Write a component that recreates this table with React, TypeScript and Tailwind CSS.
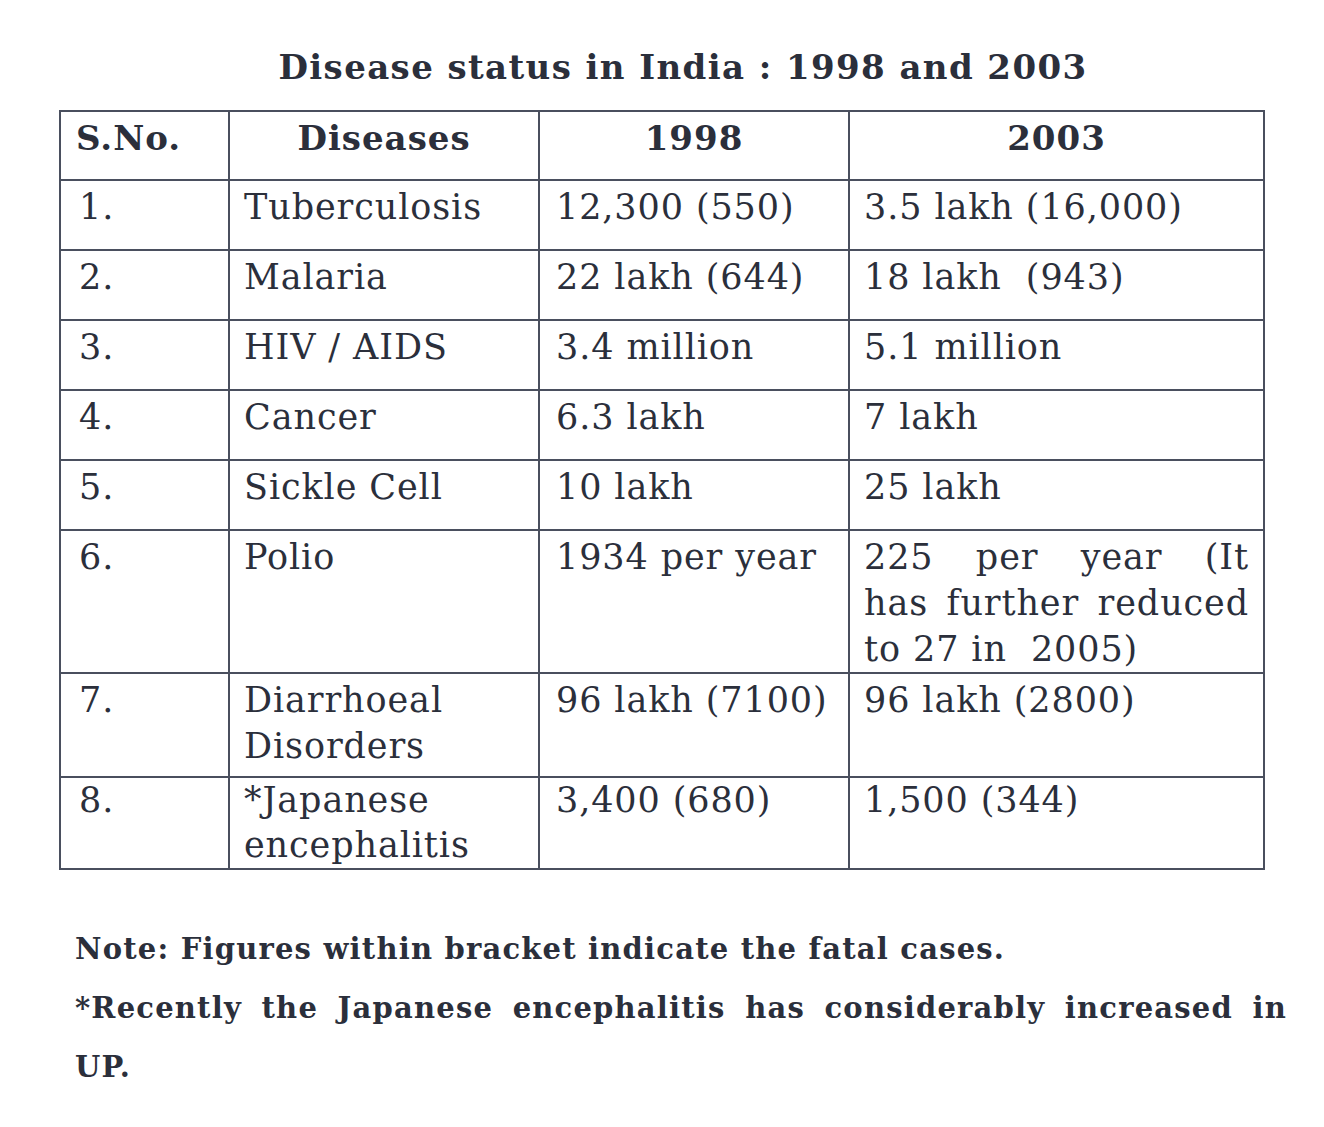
import React from "react";

const rows: { n: string; d: React.ReactNode; a: React.ReactNode; b: React.ReactNode; h: string; tight?: boolean }[] = [
  { n: "1.", d: "Tuberculosis", a: "12,300 (550)", b: "3.5 lakh (16,000)", h: "h-[70px]" },
  { n: "2.", d: "Malaria", a: "22 lakh (644)", b: "18 lakh\u00a0 (943)", h: "h-[70px]" },
  { n: "3.", d: "HIV / AIDS", a: "3.4 million", b: "5.1 million", h: "h-[70px]" },
  { n: "4.", d: "Cancer", a: "6.3 lakh", b: "7 lakh", h: "h-[70px]" },
  { n: "5.", d: "Sickle Cell", a: "10 lakh", b: "25 lakh", h: "h-[70px]" },
  {
    n: "6.",
    d: "Polio",
    a: "1934 per year",
    b: (
      <>
        <div className="text-justify [text-align-last:justify]">225 per year (It</div>
        <div className="text-justify [text-align-last:justify]">has further reduced</div>
        <div>to 27 in&nbsp; 2005)</div>
      </>
    ),
    h: "h-[139px]",
  },
  {
    n: "7.",
    d: (
      <>
        <div>Diarrhoeal</div>
        <div>Disorders</div>
      </>
    ),
    a: "96 lakh (7100)",
    b: "96 lakh (2800)",
    h: "h-[104px]",
  },
  {
    n: "8.",
    d: (
      <>
        <div>*Japanese</div>
        <div>encephalitis</div>
      </>
    ),
    a: "3,400 (680)",
    b: "1,500 (344)",
    h: "h-[92px]",
    tight: true,
  },
];

export default function App() {
  const base = "border-2 border-[#4a4f5e] align-top pb-0";
  return (
    <div
      className="w-[1324px] h-[1127px] bg-white text-[#2b2f3b] overflow-hidden"
      style={{ fontFamily: '"DejaVu Serif", "Liberation Serif", serif' }}
    >
      <div className="pt-[44px] pl-[42px] text-center text-[34px] font-bold leading-[46px] tracking-[1.4px]">
        Disease status in India : 1998 and 2003
      </div>
      <div className="pl-[59px] pt-[20px]">
        <table className="w-[1204px] table-fixed border-collapse text-[35px] tracking-[0.9px]">
          <colgroup>
            <col className="w-[169px]" />
            <col className="w-[310px]" />
            <col className="w-[310px]" />
            <col className="w-[415px]" />
          </colgroup>
          <thead>
            <tr className="h-[69px] font-bold text-[34px] tracking-[1px]">
              <th className={`${base} pt-[3px] leading-[46px] text-left pl-[15px]`}>S.No.</th>
              <th className={`${base} pt-[3px] leading-[46px] text-center`}>Diseases</th>
              <th className={`${base} pt-[3px] leading-[46px] text-center`}>1998</th>
              <th className={`${base} pt-[3px] leading-[46px] text-center`}>2003</th>
            </tr>
          </thead>
          <tbody className="font-normal">
            {rows.map((r) => {
              const cell = `${base} ${r.tight ? "pt-0 leading-[45px]" : "pt-[3px] leading-[46px]"}`;
              return (
                <tr key={r.n} className={r.h}>
                  <td className={`${cell} pl-[18px]`}>{r.n}</td>
                  <td className={`${cell} pl-[14px]`}>{r.d}</td>
                  <td className={`${cell} pl-[16px]`}>{r.a}</td>
                  <td className={`${cell} pl-[14px] pr-[14px]`}>{r.b}</td>
                </tr>
              );
            })}
          </tbody>
        </table>
      </div>
      <div className="pl-[75px] pr-[37px] pt-[50px] text-[29px] font-bold leading-[59px] tracking-[1.2px]">
        <div>Note: Figures within bracket indicate the fatal cases.</div>
        <div className="text-justify [text-align-last:justify]">
          *Recently the Japanese encephalitis has considerably increased in
        </div>
        <div>UP.</div>
      </div>
    </div>
  );
}
